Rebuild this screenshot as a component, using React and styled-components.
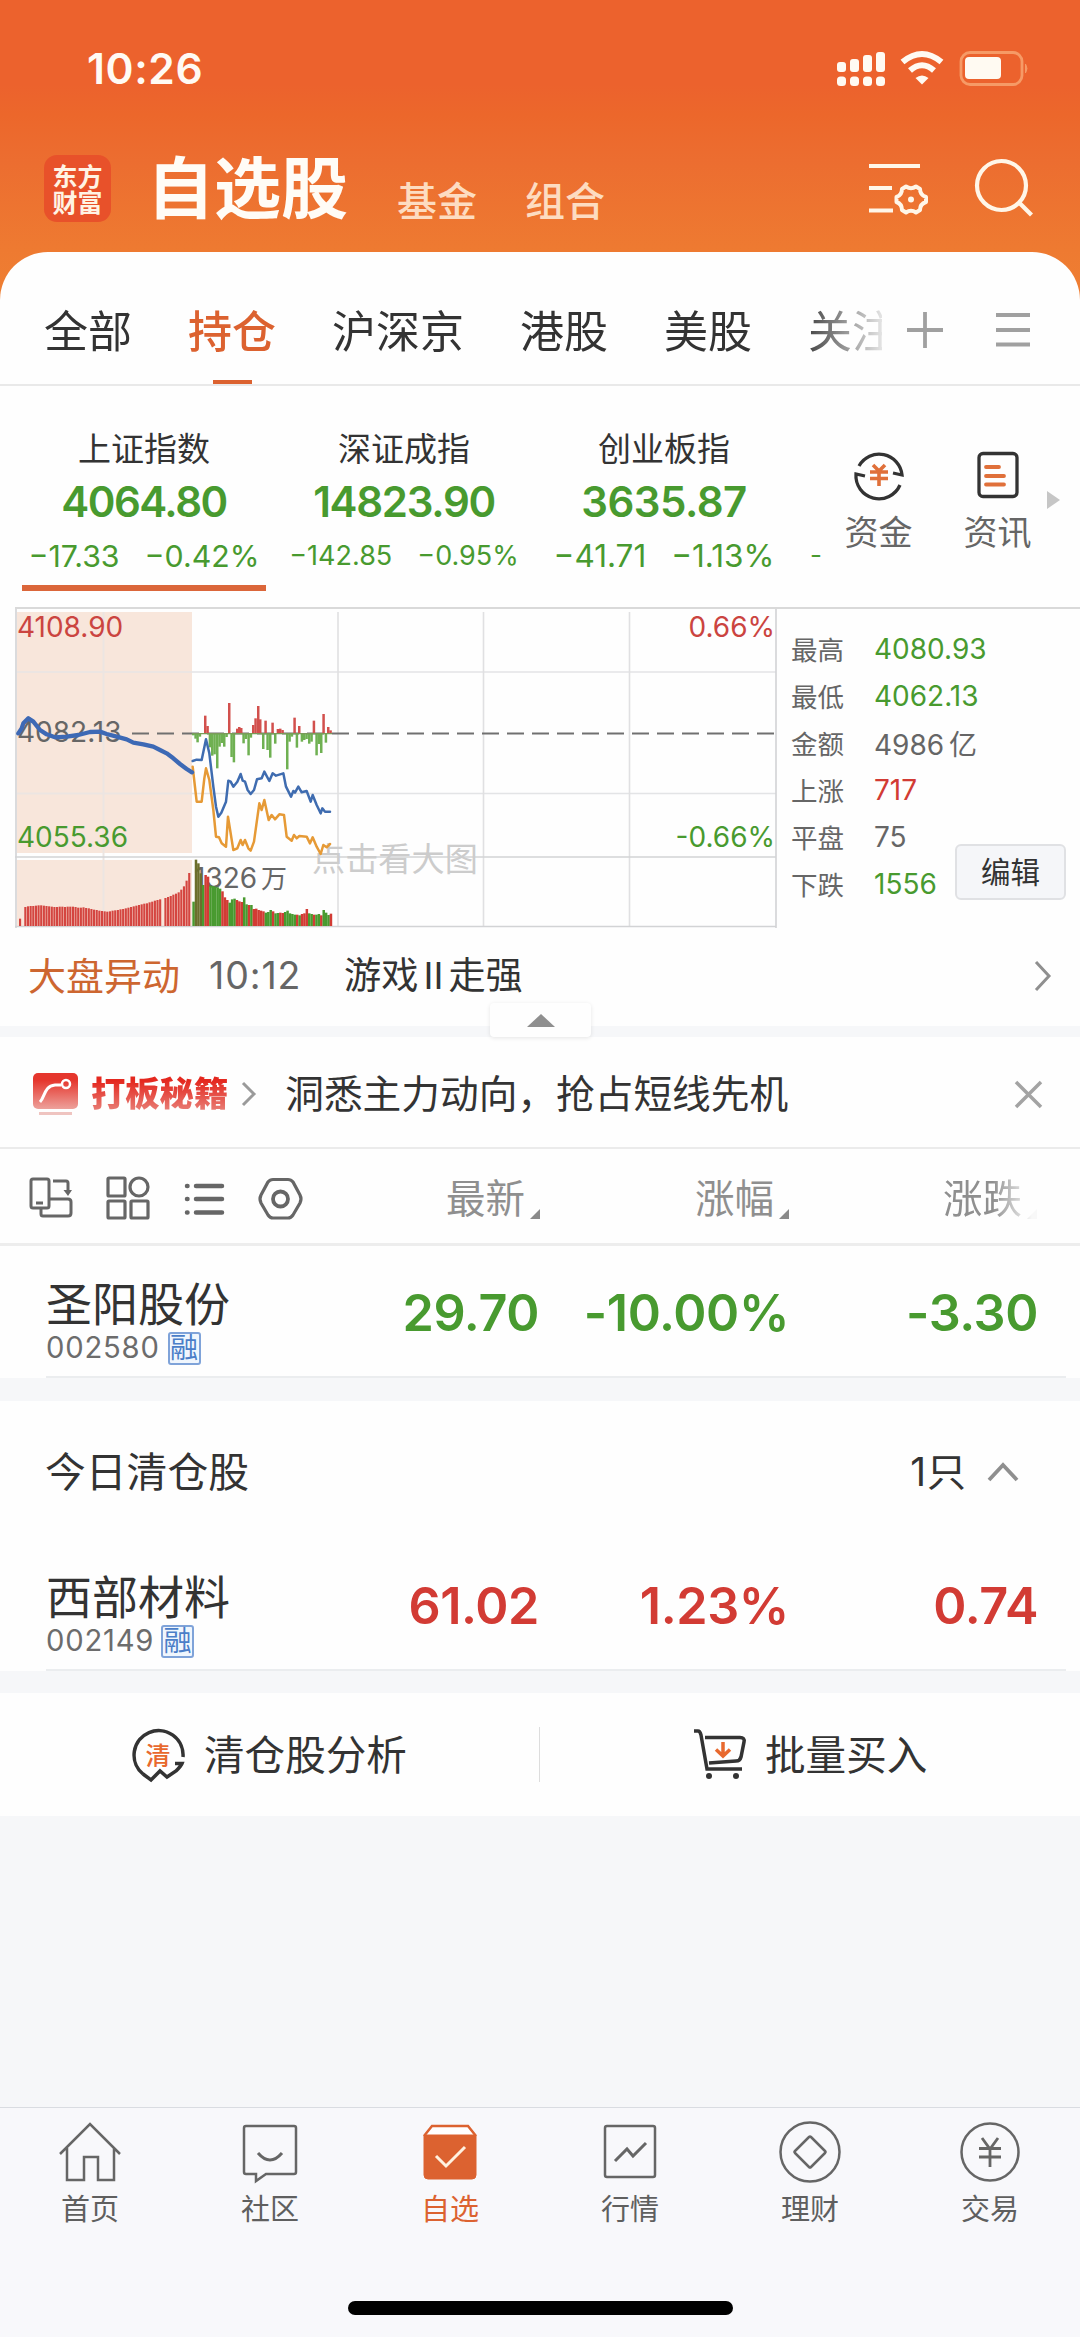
import styled, { createGlobalStyle } from "styled-components"

const RED = '#d23b34'
const GREEN = '#489a2f'
const ORANGE = '#dc6230'

const GlobalStyle = createGlobalStyle`
  * {
    box-sizing: border-box;
  }
  body {
    margin: 0;
    background-color: #f6f7f9;
    font-family: Inter, "Noto Sans CJK SC", sans-serif;
    color: #333333;
  }
  svg {
    display: block;
    flex: none;
    overflow: visible;
  }
`
const Page = styled.div`
  width: 1080px;
  height: 2337px;
  display: flex;
  flex-direction: column;
  overflow: hidden;
  background-color: #f6f7f9;
`

/* header */
const Header = styled.header`
  height: 312px;
  flex: none;
  background: linear-gradient(#ec622d 0px, #ec622d 85px, #ec672b 115px, #ec6d30 160px, #ee7a31 250px, #ef8033 312px);
`
const StatusBar = styled.div`
  height: 138px;
  padding: 0 51px 0 87px;
  display: flex;
  justify-content: space-between;
  align-items: center;
`
const Clock = styled.span`
  font-size: 42.5px;
  font-weight: 600;
  line-height: 50px;
  letter-spacing: 0.6px;
  color: #fffaf4;
`
const TitleBar = styled.div`
  height: 114px;
  padding: 0 47px 0 44px;
  display: flex;
`
const Logo = styled.div`
  width: 67px;
  height: 67px;
  margin-top: 17px;
  padding-top: 7px;
  border-radius: 13px;
  background-color: #e8512a;
  color: #fff3e4;
  font-family: "Noto Sans CJK SC", sans-serif;
  font-size: 25px;
  font-weight: 700;
  line-height: 26px;
  text-align: center;
`
const PageTitle = styled.h1`
  margin: 11px 0 0 36px;
  font-size: 67px;
  font-weight: 600;
  line-height: 80px;
  color: #fffcf6;
`
const HeaderLink = styled.span`
  margin: 39px 0 0 ${props => props.left}px;
  font-size: 40px;
  font-weight: 500;
  line-height: 50px;
  color: #fddcc1;
`
const HeaderIcons = styled.div`
  display: flex;
  margin-left: auto;
  padding-top: 20px;
  gap: 47px;
`

/* group tabs */
const Sheet = styled.main`
  position: relative;
  height: 774px;
  margin-top: -60px;
  flex: none;
  border-radius: 48px 48px 0 0;
  background-color: #fefefe;
`
const Tabs = styled.nav`
  height: 134px;
  padding: 0 50px 0 44px;
  display: flex;
  border-bottom: 2px solid #e9e9e9;
`
const TabList = styled.div`
  width: 838px;
  display: flex;
  gap: 56px;
  overflow: hidden;
  white-space: nowrap;
  mask-image: linear-gradient(90deg, #000 755px, transparent 850px);
`
const Tab = styled.span`
  height: 134px;
  flex: none;
  display: flex;
  flex-direction: column;
  align-items: center;
  justify-content: space-between;
  padding-top: 50px;
  font-size: 44px;
  font-weight: ${props => props.active ? 500 : 400};
  line-height: 60px;
  color: ${props => props.active ? ORANGE : '#333333'};
  &::after {
    content: '';
    width: 39px;
    height: 6px;
    background-color: ${props => props.active ? ORANGE : 'transparent'};
  }
`
const TabActions = styled.div`
  display: flex;
  align-items: center;
  gap: 53px;
  padding: 24px 0 0 25px;
`

/* indices */
const IndexStrip = styled.section`
  height: 221px;
  display: flex;
`
const IndexList = styled.div`
  width: 822px;
  flex: none;
  padding-left: 14px;
  display: flex;
  overflow: hidden;
`
const IndexItem = styled.div`
  width: 260px;
  flex: none;
  display: flex;
  flex-direction: column;
  align-items: center;
  padding-top: 43px;
`
const IndexName = styled.span`
  font-size: 33px;
  line-height: 40px;
`
const IndexValue = styled.span`
  margin-top: 9px;
  font-size: 42px;
  font-weight: 600;
  line-height: 48px;
  letter-spacing: ${props => props.spacing}px;
  color: ${GREEN};
`
const IndexChange = styled.div`
  width: 244px;
  height: 65px;
  display: flex;
  justify-content: center;
  gap: 25px;
  padding-top: 10px;
  border-bottom: 6px solid ${props => props.active ? '#db663a' : 'transparent'};
  font-size: ${props => props.size}px;
  line-height: 40px;
  white-space: nowrap;
  color: ${GREEN};
`
const NextIndex = styled.span`
  padding: 149px 0 0 16px;
  font-size: 26px;
  line-height: 40px;
  color: ${GREEN};
`
const Shortcuts = styled.div`
  display: flex;
  flex: 1;
  margin-left: -3px;
`
const Shortcut = styled.div`
  width: 119px;
  display: flex;
  flex-direction: column;
  align-items: center;
  padding-top: 64px;
  gap: 8px;
  font-size: 34px;
  line-height: 50px;
  color: #666666;
`
const ShortcutArrow = styled.div`
  align-self: flex-start;
  margin: 105px 0 0 -10px;
  border-left: 13px solid #c6c6c6;
  border-top: 9px solid transparent;
  border-bottom: 9px solid transparent;
`

/* chart */
const ChartPanel = styled.section`
  height: 321px;
  margin-left: 15px;
  display: flex;
  border-top: 2px solid #d9d9d9;
`
const Stats = styled.div`
  position: relative;
  flex: 1;
  padding: 16px 0 0 14px;
`
const StatRow = styled.div`
  height: 47px;
  display: flex;
  align-items: center;
  color: #666666;
`
const StatLabel = styled.span`
  width: 83px;
  font-size: 26.5px;
`
const StatValue = styled.span`
  font-size: 28px;
  word-spacing: -3px;
  color: ${props => props.color || '#666666'};
`
const EditButton = styled.button`
  position: absolute;
  right: 14px;
  top: 235px;
  width: 111px;
  height: 56px;
  padding: 0;
  border: 2px solid #e0e1e4;
  border-radius: 6px;
  background-color: #f5f6f9;
  font-family: inherit;
  font-size: 29.5px;
  line-height: 40px;
  color: #333333;
`

/* market news */
const NewsBar = styled.section`
  position: relative;
  height: 98px;
  padding: 0 29px 3px 28px;
  display: flex;
  align-items: center;
  font-size: 38px;
  line-height: 50px;
`
const NewsTag = styled.span`
  width: 181px;
  color: #cd6630;
`
const NewsTime = styled.span`
  width: 135px;
  font-size: 37.5px;
  letter-spacing: 0.9px;
  color: #666666;
`
const NewsText = styled.span`
  flex: 1;
  font-size: 37.2px;
`
const Numeral = styled.span`
  padding: 0 5px;
`
const CollapseHandle = styled.div`
  position: absolute;
  left: 490px;
  top: 75px;
  width: 101px;
  height: 34px;
  display: flex;
  justify-content: center;
  align-items: center;
  padding-top: 1px;
  background-color: #fefefe;
  border-radius: 4px;
  box-shadow: 0 1px 4px rgba(0, 0, 0, 0.1);
`

/* promo */
const Promo = styled.section`
  height: 112px;
  margin-top: 11px;
  flex: none;
  padding: 4px 38px 0 33px;
  display: flex;
  align-items: center;
  background-color: #fefefe;
  border-bottom: 2px solid #ebebeb;
`
const PromoBrand = styled.span`
  margin: 0 14px 0 13px;
  font-size: 34.3px;
  font-weight: 900;
  line-height: 44px;
  background: linear-gradient(#e4281f 20%, #e88078 90%);
  background-clip: text;
  color: transparent;
`
const PromoText = styled.span`
  flex: 1;
  margin-left: 29px;
  font-size: 38.7px;
  line-height: 50px;
`

/* stock table */
const Toolbar = styled.section`
  height: 97px;
  flex: none;
  display: flex;
  align-items: center;
  padding-top: 3px;
  background-color: #fefefe;
  border-bottom: 3px solid #ededed;
`
const Tools = styled.div`
  width: 350px;
  padding-left: 29px;
  display: flex;
  gap: 33px;
  align-items: center;
`
const SortHeader = styled.span`
  width: ${props => props.width}px;
  display: flex;
  justify-content: flex-end;
  align-items: flex-end;
  gap: 5px;
  margin-top: 2px;
  font-size: 39.5px;
  line-height: 50px;
  color: #8f8f8f;
  mask-image: ${props => props.fade ? 'linear-gradient(90deg, #000 82%, rgba(0, 0, 0, 0.05) 98%)' : 'none'};
  &::after {
    content: '';
    margin-bottom: 5px;
    border-left: 10px solid transparent;
    border-bottom: 10px solid #8a8a8a;
  }
`
const StockRow = styled.section`
  height: 132px;
  flex: none;
  display: flex;
  background-color: #fefefe;
`
const StockInner = styled.div`
  flex: 1;
  margin: 0 14px 0 46px;
  display: flex;
  border-bottom: 2px solid #ebedef;
`
const StockName = styled.div`
  width: 274px;
  padding-top: 28px;
  font-size: 46px;
  line-height: 60px;
`
const StockCode = styled.div`
  display: flex;
  align-items: center;
  gap: ${props => props.gap}px;
  height: 34px;
  margin-top: -3px;
  font-size: 29.2px;
  line-height: 34px;
  letter-spacing: 0.8px;
  color: #6c6c6c;
`
const MarginBadge = styled.span`
  width: 33px;
  height: 33px;
  border: 2px solid #7fa3d9;
  border-radius: 3px;
  background-color: #f0f6fd;
  font-size: 28px;
  line-height: 28px;
  letter-spacing: 0;
  text-align: center;
  text-indent: -0.5px;
  color: #4b7ec8;
`
const StockValue = styled.span`
  width: ${props => props.width}px;
  padding-top: 37px;
  font-size: 50.3px;
  font-weight: 600;
  line-height: 60px;
  letter-spacing: -0.4px;
  text-align: right;
  white-space: nowrap;
  color: ${props => props.down ? GREEN : RED};
`
const ClearedHeader = styled.section`
  height: 138px;
  margin-top: 23px;
  flex: none;
  padding: 3px 61px 0 45px;
  display: flex;
  align-items: center;
  background-color: #fefefe;
  font-size: 40.8px;
  line-height: 50px;
`
const ClearedCount = styled.span`
  margin: 0 20px 0 auto;
  font-size: 39px;
  letter-spacing: 1px;
`
const Actions = styled.section`
  height: 123px;
  margin-top: 22px;
  flex: none;
  display: flex;
  align-items: center;
  background-color: #fefefe;
`
const Action = styled.div`
  width: 540px;
  height: 55px;
  display: flex;
  align-items: center;
  gap: 19px;
  padding-left: ${props => props.left}px;
  font-size: 40.6px;
  line-height: 50px;
  border-right: ${props => props.divider ? '1px solid #dddddd' : 'none'};
`
const ActionLabel = styled.span`
  padding-top: 3px;
`

/* bottom nav */
const BottomNav = styled.nav`
  height: 194px;
  margin-top: auto;
  flex: none;
  display: flex;
  border-top: 1px solid #d9dce1;
  background-color: #f8f8fb;
`
const NavItem = styled.div`
  width: 180px;
  display: flex;
  flex-direction: column;
  align-items: center;
  padding-top: 13px;
  gap: 9px;
  font-size: 29px;
  line-height: 36px;
  color: ${props => props.active ? ORANGE : '#5f5f5f'};
`
const HomeIndicatorBar = styled.div`
  height: 36px;
  flex: none;
  background-color: #f8f8fb;
  &::after {
    content: '';
    display: block;
    width: 385px;
    height: 14px;
    margin: 0 0 0 348px;
    border-radius: 7px;
    background-color: #000;
  }
`

const MORNING = '55,430 65,415 70,400 85,385 100,395 120,420 140,433 165,442 200,440 235,435 270,426 300,425 320,432 350,440 380,448 400,458 430,463 460,470 480,480 500,490 520,505 540,522 560,537 576,547'
const AVERAGE = '578,513 590,509 605,510 618,448 628,490 640,590 648,650 655,680 664,668 678,635 685,572 692,575 700,590 712,575 722,552 728,572 735,575 743,600 752,612 762,600 771,568 785,565 793,545 808,573 818,550 828,557 850,550 858,590 873,620 880,603 885,608 895,590 905,607 920,603 932,635 938,615 950,645 962,670 967,655 975,665 990,665'
const PRICE = '578,530 590,635 605,635 613,565 618,535 628,570 640,660 648,740 657,742 665,760 678,770 684,680 700,780 712,775 722,750 728,765 735,750 745,775 752,782 762,755 778,640 785,660 793,630 806,690 815,675 825,688 838,673 852,675 860,740 875,752 882,735 890,745 898,738 920,740 930,760 938,742 950,770 962,792 970,765 980,772 990,762'

const INFLOW = [[616, 377], [623, 408], [688, 339], [712, 416], [718, 411], [724, 414], [760, 405], [767, 385], [775, 348], [781, 388], [797, 392], [818, 398], [834, 417], [841, 416], [848, 420], [884, 383], [898, 408], [942, 392], [971, 372], [985, 411], [992, 421]]
const OUTFLOW = [[580, 436], [587, 446], [593, 457], [600, 440], [630, 472], [637, 497], [644, 493], [652, 535], [659, 470], [666, 459], [673, 470], [680, 441], [695, 501], [702, 517], [731, 460], [738, 447], [746, 496], [753, 443], [790, 477], [803, 480], [811, 503], [826, 461], [862, 538], [869, 455], [876, 440], [891, 473], [906, 455], [913, 450], [920, 447], [928, 461], [935, 455], [950, 496], [957, 462], [964, 489], [978, 458]]

const MORNING_VOLUME = [986, 0, 951, 949, 948, 948, 947, 946, 946, 947, 948, 949, 950, 951, 951, 950, 950, 951, 950, 950, 950, 951, 953, 953, 952, 954, 955, 957, 959, 960, 962, 963, 964, 965, 964, 962, 961, 960, 958, 957, 955, 953, 951, 949, 947, 945, 943, 941, 940, 937, 935, 932, 930, 928, 0, 924, 921, 918, 914, 911, 907, 899, 889, 872, 849]
// r = up, g = down, o = both bars overlapping
const VOLUME = [['g', 935], ['o', 809], ['o', 820], ['o', 850], ['g', 885], ['r', 855], ['r', 860], ['g', 887], ['g', 888], ['g', 890], ['g', 892], ['g', 896], ['r', 904], ['r', 922], ['r', 930], ['g', 938], ['g', 928], ['g', 926], ['r', 930], ['r', 934], ['r', 936], ['g', 922], ['g', 943], ['r', 945], ['g', 945], ['r', 957], ['r', 956], ['r', 960], ['r', 962], ['r', 964], ['g', 968], ['g', 966], ['g', 960], ['r', 964], ['g', 970], ['g', 969], ['r', 968], ['r', 969], ['g', 966], ['g', 962], ['g', 970], ['g', 972], ['g', 974], ['r', 974], ['g', 976], ['r', 972], ['r', 970], ['r', 957], ['g', 970], ['g', 972], ['r', 974], ['g', 974], ['g', 972], ['r', 976], ['g', 960], ['g', 968], ['g', 975], ['r', 971]]
const VOLUME_COLORS = { r: '#d23b34', g: '#489a2f', o: '#6b6e2c' }

const ChartText = styled.text`
  font-size: ${props => props.$size || 28}px;
`

function TrendChart() {
  return (
    <svg width="762" height="319" viewBox="0 0 762 319">
      <rect x="2" y="3" width="175" height="241" fill="#f8e6db" />
      <rect x="2" y="251" width="175" height="67" fill="#f8e6db" />
      <path d="M177 63H761 M177 184.500H761" stroke="#e3e4e6" strokeWidth="1.600" />
      <path d="M2 63H177 M2 184.500H177 M88.500 3V318" stroke="#ece5e2" strokeWidth="2" />
      <path d="M323 3V318 M468.500 3V318 M614.500 3V318" stroke="#e0e0e2" strokeWidth="1.600" />
      <path d="M1 0V319 M761 0V319 M0 248H761 M0 317.500H761" stroke="#d2d3d5" strokeWidth="1.600" fill="none" />
      <path d="M117 124.500H761" stroke="#707070" strokeWidth="2" strokeDasharray="17 8" />
      <ChartText x="2" y="28" fill="#cb4440">4108.90</ChartText>
      <ChartText x="760" y="28" textAnchor="end" fill="#cb4440">0.66%</ChartText>
      <ChartText x="2" y="133" fill="#666666">4082.13</ChartText>
      <ChartText x="2" y="238" fill={GREEN}>4055.36</ChartText>
      <ChartText x="760" y="238" textAnchor="end" fill={GREEN}>-0.66%</ChartText>
      <ChartText x="179" y="279" fill="#666666">1326</ChartText>
      <ChartText x="246" y="279" $size={26} fill="#666666">万</ChartText>
      <ChartText x="297" y="262" $size={33.2} fill="#cccccc">点击看大图</ChartText>
      <g transform="translate(-15 -19) scale(0.33333)">
        {MORNING_VOLUME.map((top, i) => top > 0 && (
          <rect key={i} x={57 + i * 7.93} y={top} width="6.4" height={1008 - top} fill="#d44540" />
        ))}
        {VOLUME.map(([kind, top], i) => (
          <rect key={i} x={577 + i * 7.23} y={top} width="7.5" height={1008 - top} fill={VOLUME_COLORS[kind]} />
        ))}
        {INFLOW.map(([x, y]) => <rect key={x} x={x - 4} y={y} width="7.5" height={431 - y} fill="#d2504d" />)}
        {OUTFLOW.map(([x, y]) => <rect key={x} x={x - 4} y="431" width="7.5" height={y - 431} fill="#6fb052" />)}
        <path d="M577 431H996" stroke="#7a9a5a" strokeWidth="4" />
        <g fill="none" strokeLinejoin="round" strokeLinecap="round">
          <polyline points={PRICE} stroke="#e69a36" strokeWidth="7.500" />
          <polyline points={AVERAGE} stroke="#3f6cb0" strokeWidth="7.500" />
          <polyline points={MORNING} stroke="#3d69b5" strokeWidth="13" />
        </g>
      </g>
    </svg>
  )
}

const INDICES = [
  { name: '上证指数', value: '4064.80', diff: '−17.33', pct: '−0.42%', size: 30.3, spacing: -1.5, active: true },
  { name: '深证成指', value: '14823.90', diff: '−142.85', pct: '−0.95%', size: 27, spacing: -1.3 },
  { name: '创业板指', value: '3635.87', diff: '−41.71', pct: '−1.13%', size: 31.5, spacing: -0.5 },
]

const STATS = [
  ['最高', '4080.93', GREEN],
  ['最低', '4062.13', GREEN],
  ['金额', '4986 亿'],
  ['上涨', '717', RED],
  ['平盘', '75'],
  ['下跌', '1556', GREEN],
]

const NAV = [
  { label: '首页', icon: <path d="M2 33L32 3L62 33 M9 27V59H26V36H40V59H56V27" /> },
  { label: '社区', icon: <><path d="M9 5H56Q58 5 58 7V51Q58 53 56 53H28L18 60V53H8Q6 53 6 51V7Q6 5 8 5Z" /><path d="M20 32Q32 46 44 32" strokeWidth="3" /></> },
  {
    label: '自选', active: true, icon: (
      <>
        <path d="M6 15L14 5H50L58 15" fill="#fff" />
        <path d="M6 14H58V54Q58 58 54 58H10Q6 58 6 54Z" fill={ORANGE} strokeWidth="1" />
        <path d="M18 35L28 45L47 26" stroke="#fff1df" strokeWidth="3" />
      </>
    ),
  },
  { label: '行情', icon: <><rect x="7" y="5" width="50" height="51" rx="2" /><path d="M17 40L29 28L35 35L48 22" strokeWidth="3" /></> },
  { label: '理财', icon: <><circle cx="32" cy="31" r="29.500" /><path d="M31 16Q32 15 33 16L47 30Q48 31 47 32L33 46Q32 47 31 46L17 32Q16 31 17 30Z" /></> },
  { label: '交易', icon: <><circle cx="32" cy="31" r="28.500" /><path d="M24 17L32 28L40 17 M21 27.500H43 M21 36H43 M32 28V46" strokeWidth="2.800" /></> },
]

function StatusIcons() {
  return (
    <svg width="192" height="36" viewBox="0 0 192 36">
      <g fill="#fffaf2">
        <rect x="0" y="11" width="9" height="10" rx="3" />
        <rect x="13" y="8" width="9" height="13" rx="3" />
        <rect x="26" y="4" width="9" height="17" rx="3" />
        <rect x="39" y="1" width="9" height="20" rx="3" />
        <rect x="0" y="25.500" width="9" height="9.500" rx="3.500" />
        <rect x="13" y="25.500" width="9" height="9.500" rx="3.500" />
        <rect x="26" y="25.500" width="9" height="9.500" rx="3.500" />
        <rect x="39" y="25.500" width="9" height="9.500" rx="3.500" />
        <path d="M78.500 27Q85 22 91.500 27L85 33.500Z" />
        <rect x="128" y="6" width="36" height="22" rx="4" />
      </g>
      <path d="M65.500 11Q85 -5 104.500 11" stroke="#fffaf2" strokeWidth="6" fill="none" />
      <path d="M73 19.500Q85 9 97 19.500" stroke="#fffaf2" strokeWidth="6" fill="none" />
      <rect x="124" y="1.500" width="61" height="32" rx="9" fill="none" stroke="#f69a66" strokeWidth="2.800" />
      <path d="M188.500 13Q191.500 17.500 188.500 22Z" fill="#f69a66" stroke="#f69a66" />
    </svg>
  )
}

export default function App() {
  return (
    <Page>
      <GlobalStyle />
      <Header>
        <StatusBar>
          <Clock>10:26</Clock>
          <StatusIcons />
        </StatusBar>
        <TitleBar>
          <Logo>东方<br />财富</Logo>
          <PageTitle>自选股</PageTitle>
          <HeaderLink left={49}>基金</HeaderLink>
          <HeaderLink left={48}>组合</HeaderLink>
          <HeaderIcons>
            <svg width="59" height="60" viewBox="0 0 59 60" fill="none" stroke="#fff6e8" strokeWidth="4">
              <path d="M0 8H51 M0 30H23 M0 52.500H24" />
              <path d="M37 28.500Q42 32 47 28.500L51 31Q51 37 57 39V44Q51 46 51 52L47 54.500Q42 51 37 54.500L33 52Q33 46 27.500 44V39Q33 37 33 31Z" strokeLinejoin="round" />
              <circle cx="42" cy="41.500" r="2" fill="#fff6e8" strokeWidth="2" />
            </svg>
            <svg width="58" height="60" viewBox="0 0 58 60" fill="none" stroke="#fff6e8" strokeWidth="4.200">
              <circle cx="26.500" cy="27.500" r="24.500" />
              <path d="M43.500 44L56.500 57" />
            </svg>
          </HeaderIcons>
        </TitleBar>
      </Header>

      <Sheet>
        <Tabs>
          <TabList>
            <Tab>全部</Tab>
            <Tab active="true">持仓</Tab>
            <Tab>沪深京</Tab>
            <Tab>港股</Tab>
            <Tab>美股</Tab>
            <Tab>关注</Tab>
          </TabList>
          <TabActions>
            <svg width="36" height="36" viewBox="0 0 36 36" stroke="#a0a0a0" strokeWidth="3.800">
              <path d="M0 18H36 M18 0V36" />
            </svg>
            <svg width="34" height="36" viewBox="0 0 34 36" stroke="#a0a0a0" strokeWidth="3.800">
              <path d="M0 3H34 M0 18H34 M0 32.500H34" />
            </svg>
          </TabActions>
        </Tabs>

        <IndexStrip>
          <IndexList>
            {INDICES.map(item => (
              <IndexItem key={item.name}>
                <IndexName>{item.name}</IndexName>
                <IndexValue spacing={item.spacing}>{item.value}</IndexValue>
                <IndexChange size={item.size} active={item.active}>
                  <span>{item.diff}</span>
                  <span>{item.pct}</span>
                </IndexChange>
              </IndexItem>
            ))}
            <NextIndex>-</NextIndex>
          </IndexList>
          <Shortcuts>
            <Shortcut>
              <svg width="50" height="50" viewBox="0 0 50 50" fill="none" stroke="#333333" strokeWidth="3.300">
                <path d="M5 16A23 23 0 0 1 48 25L39 23" />
                <path d="M46 35A23 23 0 0 1 2 24L11 26" />
                <path d="M19 15L25 21L31 15 M16 22H34 M16 28.500H34 M25 21V36" stroke="#e0703a" strokeWidth="3.600" />
              </svg>
              资金
            </Shortcut>
            <Shortcut>
              <svg width="50" height="50" viewBox="0 0 50 50" fill="none" stroke="#333333" strokeWidth="3.300">
                <rect x="6" y="3.500" width="38" height="43" rx="4" />
                <path d="M13 17H26 M13 26H31 M13 34.500H31" stroke="#e0703a" strokeLinecap="round" strokeWidth="3.800" />
              </svg>
              资讯
            </Shortcut>
            <ShortcutArrow />
          </Shortcuts>
        </IndexStrip>

        <ChartPanel>
          <TrendChart />
          <Stats>
            {STATS.map(([label, value, color]) => (
              <StatRow key={label}>
                <StatLabel>{label}</StatLabel>
                <StatValue color={color}>{value}</StatValue>
              </StatRow>
            ))}
            <EditButton>编辑</EditButton>
          </Stats>
        </ChartPanel>

        <NewsBar>
          <NewsTag>大盘异动</NewsTag>
          <NewsTime>10:12</NewsTime>
          <NewsText>游戏<Numeral>Ⅱ</Numeral>走强</NewsText>
          <svg width="17" height="30" viewBox="0 0 17 30" fill="none" stroke="#8f8f8f" strokeWidth="3">
            <path d="M2 1L15 15L2 29" />
          </svg>
          <CollapseHandle>
            <svg width="28" height="13" viewBox="0 0 28 13"><path d="M14 0L28 13H0Z" fill="#8f8f8f" /></svg>
          </CollapseHandle>
        </NewsBar>
      </Sheet>

      <Promo>
        <svg width="45" height="42" viewBox="0 0 45 42">
          <defs>
            <linearGradient id="promo" x1="0" y1="0" x2="0" y2="1">
              <stop offset="0.2" stopColor="#e5362d" />
              <stop offset="1" stopColor="#eda19b" />
            </linearGradient>
          </defs>
          <rect width="45" height="36" rx="5" fill="url(#promo)" />
          <path d="M7 29C12 24 11 13 22 12H28" fill="none" stroke="#fff" strokeWidth="3" />
          <circle cx="33" cy="11" r="4" fill="none" stroke="#fff" strokeWidth="2.500" />
          <rect x="6" y="39" width="33" height="3" fill="#efc4c0" />
        </svg>
        <PromoBrand>打板秘籍</PromoBrand>
        <svg width="14" height="24" viewBox="0 0 14 24" fill="none" stroke="#9a9a9a" strokeWidth="3">
          <path d="M1 1L12 12L1 23" />
        </svg>
        <PromoText>洞悉主力动向，抢占短线先机</PromoText>
        <svg width="27" height="27" viewBox="0 0 27 27" stroke="#a3a3a3" strokeWidth="3.500">
          <path d="M1 1L26 26 M26 1L1 26" />
        </svg>
      </Promo>

      <Toolbar>
        <Tools>
          <svg width="44" height="44" viewBox="0 0 44 44" fill="none" stroke="#666666" strokeWidth="3">
            <rect x="2" y="3" width="18" height="29" rx="2" />
            <path d="M7 27H14 M24 5H37Q39 5 39 7V15 M20 23H39Q42 23 42 26V37Q42 40 39 40H14Q12 40 12 38V32" />
            <path d="M34.500 14H43L39 20Z" fill="#666666" stroke="none" />
          </svg>
          <svg width="44" height="44" viewBox="0 0 44 44" fill="none" stroke="#666666" strokeWidth="3.200">
            <rect x="2" y="2" width="17" height="18" rx="1" />
            <circle cx="33" cy="11" r="9" />
            <rect x="2" y="25" width="17" height="17" rx="1" />
            <rect x="25" y="25" width="17" height="17" rx="1" />
          </svg>
          <svg width="44" height="44" viewBox="0 0 44 44" fill="none" stroke="#666666" strokeWidth="4.500" strokeLinecap="round">
            <path d="M13 10H39 M13 23H39 M13 36.500H39 M4 10H4.500 M4 23H4.500 M4 36.500H4.500" />
          </svg>
          <svg width="44" height="44" viewBox="0 0 44 44" fill="none" stroke="#666666" strokeWidth="3.200">
            <path d="M13 3.500H28Q31 3.500 33 6L40 19Q42 23 40 27L33 39Q31 42 28 42H13Q10 42 8 39L1 27Q-1 23 1 19L8 6Q10 3.500 13 3.500Z" />
            <circle cx="20.500" cy="23" r="7.500" strokeWidth="3.800" />
          </svg>
        </Tools>
        <SortHeader width={190}>最新</SortHeader>
        <SortHeader width={249}>涨幅</SortHeader>
        <SortHeader width={248} fade="true">涨跌</SortHeader>
      </Toolbar>

      <StockRow>
        <StockInner>
          <StockName>
            圣阳股份
            <StockCode gap={8}>002580<MarginBadge>融</MarginBadge></StockCode>
          </StockName>
          <StockValue width={219} down="true">29.70</StockValue>
          <StockValue width={250} down="true">-10.00%</StockValue>
          <StockValue width={249} down="true">-3.30</StockValue>
        </StockInner>
      </StockRow>

      <ClearedHeader>
        今日清仓股
        <ClearedCount>1只</ClearedCount>
        <svg width="32" height="18" viewBox="0 0 32 18" fill="none" stroke="#8f8f8f" strokeWidth="3.800">
          <path d="M2 17L16 2L30 17" />
        </svg>
      </ClearedHeader>

      <StockRow>
        <StockInner>
          <StockName>
            西部材料
            <StockCode gap={7}>002149<MarginBadge>融</MarginBadge></StockCode>
          </StockName>
          <StockValue width={219}>61.02</StockValue>
          <StockValue width={250}>1.23%</StockValue>
          <StockValue width={249}>0.74</StockValue>
        </StockInner>
      </StockRow>

      <Actions>
        <Action left={132} divider="true">
          <svg width="53" height="52" viewBox="0 0 53 52" fill="none" stroke="#333333" strokeWidth="3.500">
            <path d="M11 45A24.500 24.500 0 1 1 51 28 M11 45L19 51L28 42L35 48L44 42Q49 37 50 34.500H43" />
            <text x="13.500" y="36" fontSize="25" fontWeight="500" fill="#e8692e" stroke="none">清</text>
          </svg>
          <ActionLabel>清仓股分析</ActionLabel>
        </Action>
        <Action left={153}>
          <svg width="53" height="52" viewBox="0 0 53 52" fill="none" stroke="#333333" strokeWidth="3.500">
            <path d="M1 2H5Q7 2 8 6L14 40H49 M12 8.500H47Q52 8.500 51 13L48 28Q47 32 43 32L16 34" />
            <circle cx="16" cy="47" r="3" fill="#333333" stroke="none" />
            <circle cx="43" cy="47" r="3" fill="#333333" stroke="none" />
            <path d="M30 13V27 M23 20.500L30 27L37 20.500" stroke="#e8692e" />
          </svg>
          <ActionLabel>批量买入</ActionLabel>
        </Action>
      </Actions>

      <BottomNav>
        {NAV.map(item => (
          <NavItem key={item.label} active={item.active}>
            <svg width="64" height="62" viewBox="0 0 64 62" fill="none" stroke={item.active ? ORANGE : '#666666'} strokeWidth="2.500">
              {item.icon}
            </svg>
            {item.label}
          </NavItem>
        ))}
      </BottomNav>
      <HomeIndicatorBar />
    </Page>
  )
}
